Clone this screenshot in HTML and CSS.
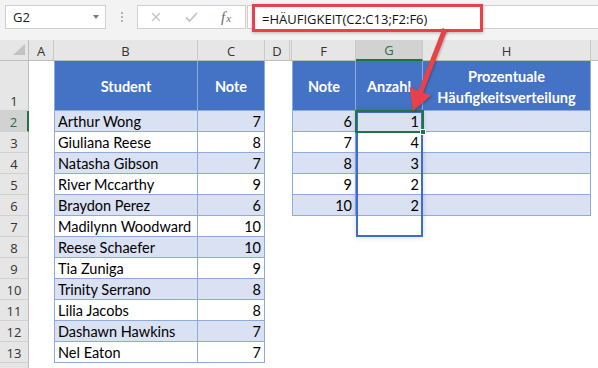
FILE: index.html
```html
<!DOCTYPE html>
<html lang="de">
<head>
<meta charset="utf-8">
<title>HÄUFIGKEIT</title>
<link rel="stylesheet" href="styles.css">
</head>
<body>
<div class="toolbar">
  <div class="namebox"><span>G2</span><span class="dd"></span></div>
  <div class="dots"><i></i><i></i><i></i></div>
  <div class="fxbox">
    <svg class="ico-x" width="10" height="10" viewBox="0 0 10 10"><path d="M1 1L9 9M9 1L1 9" stroke="#c4c4c4" stroke-width="1.4" fill="none"/></svg>
    <svg class="ico-ok" width="13" height="10" viewBox="0 0 13 10"><path d="M1 5.5L4.5 9L12 1" stroke="#c4c4c4" stroke-width="1.8" fill="none"/></svg>
    <span class="fx"><i>f</i><i class="fxx">x</i></span>
  </div>
  <div class="formula"><div class="hl">=HÄUFIGKEIT(C2:C13;F2:F6)</div></div>
</div>
<div class="sheet">
  <div class="row colhdr">
    <div class="rh corner"><span class="tri"></span></div>
    <div class="hc a">A</div><div class="hc b">B</div><div class="hc cc">C</div><div class="hc d">D</div><div class="hc e"></div><div class="hc f">F</div><div class="hc g sel">G</div><div class="hc h">H</div><div class="hc i"></div>
  </div>
  <div class="row tall">
    <div class="rh">1</div>
    <div class="c a"></div><div class="c b t hd">Student</div><div class="c cc t hd">Note</div><div class="c d"></div><div class="c e"></div><div class="c f t hd">Note</div><div class="c g t hd">Anzahl</div><div class="c h t hd">Prozentuale<br>Häufigkeitsverteilung</div><div class="c i"></div>
  </div>
  <div class="row band">
    <div class="rh sel">2</div>
    <div class="c a"></div><div class="c b t">Arthur Wong</div><div class="c cc t n">7</div><div class="c d"></div><div class="c e"></div><div class="c f t n">6</div><div class="c g t n">1</div><div class="c h t"></div><div class="c i"></div>
  </div>
  <div class="row">
    <div class="rh">3</div>
    <div class="c a"></div><div class="c b t">Giuliana Reese</div><div class="c cc t n">8</div><div class="c d"></div><div class="c e"></div><div class="c f t n">7</div><div class="c g t n">4</div><div class="c h t"></div><div class="c i"></div>
  </div>
  <div class="row band">
    <div class="rh">4</div>
    <div class="c a"></div><div class="c b t">Natasha Gibson</div><div class="c cc t n">7</div><div class="c d"></div><div class="c e"></div><div class="c f t n">8</div><div class="c g t n">3</div><div class="c h t"></div><div class="c i"></div>
  </div>
  <div class="row">
    <div class="rh">5</div>
    <div class="c a"></div><div class="c b t">River Mccarthy</div><div class="c cc t n">9</div><div class="c d"></div><div class="c e"></div><div class="c f t n">9</div><div class="c g t n">2</div><div class="c h t"></div><div class="c i"></div>
  </div>
  <div class="row band">
    <div class="rh">6</div>
    <div class="c a"></div><div class="c b t">Braydon Perez</div><div class="c cc t n">6</div><div class="c d"></div><div class="c e"></div><div class="c f t n">10</div><div class="c g t n">2</div><div class="c h t"></div><div class="c i"></div>
  </div>
  <div class="row">
    <div class="rh">7</div>
    <div class="c a"></div><div class="c b t">Madilynn Woodward</div><div class="c cc t n">10</div><div class="c d"></div><div class="c e"></div><div class="c f"></div><div class="c g"></div><div class="c h"></div><div class="c i"></div>
  </div>
  <div class="row band">
    <div class="rh">8</div>
    <div class="c a"></div><div class="c b t">Reese Schaefer</div><div class="c cc t n">10</div><div class="c d"></div><div class="c e"></div><div class="c f"></div><div class="c g"></div><div class="c h"></div><div class="c i"></div>
  </div>
  <div class="row">
    <div class="rh">9</div>
    <div class="c a"></div><div class="c b t">Tia Zuniga</div><div class="c cc t n">9</div><div class="c d"></div><div class="c e"></div><div class="c f"></div><div class="c g"></div><div class="c h"></div><div class="c i"></div>
  </div>
  <div class="row band">
    <div class="rh">10</div>
    <div class="c a"></div><div class="c b t">Trinity Serrano</div><div class="c cc t n">8</div><div class="c d"></div><div class="c e"></div><div class="c f"></div><div class="c g"></div><div class="c h"></div><div class="c i"></div>
  </div>
  <div class="row">
    <div class="rh">11</div>
    <div class="c a"></div><div class="c b t">Lilia Jacobs</div><div class="c cc t n">8</div><div class="c d"></div><div class="c e"></div><div class="c f"></div><div class="c g"></div><div class="c h"></div><div class="c i"></div>
  </div>
  <div class="row band">
    <div class="rh">12</div>
    <div class="c a"></div><div class="c b t">Dashawn Hawkins</div><div class="c cc t n">7</div><div class="c d"></div><div class="c e"></div><div class="c f"></div><div class="c g"></div><div class="c h"></div><div class="c i"></div>
  </div>
  <div class="row">
    <div class="rh">13</div>
    <div class="c a"></div><div class="c b t">Nel Eaton</div><div class="c cc t n">7</div><div class="c d"></div><div class="c e"></div><div class="c f"></div><div class="c g"></div><div class="c h"></div><div class="c i"></div>
  </div>
  <div class="row">
    <div class="rh"></div>
    <div class="c a"></div><div class="c b"></div><div class="c cc"></div><div class="c d"></div><div class="c e"></div><div class="c f"></div><div class="c g"></div><div class="c h"></div><div class="c i"></div>
  </div>
  <div class="range"></div>
  <div class="selbox"><span class="handle"></span></div>
</div>
<svg class="arrow" width="598" height="368" viewBox="0 0 598 368">
  <line x1="445" y1="29" x2="420.5" y2="92" stroke="#e8414b" stroke-width="5"/>
  <polygon points="413,111 431,95.4 409.5,87.2" fill="#e8414b"/>
</svg>
</body>
</html>
```

FILE: styles.css
```css
* { box-sizing: border-box; margin: 0; padding: 0; }
html, body { width: 598px; height: 368px; overflow: hidden; background: #fff; }
body { position: relative; font-family: "Open Sans", sans-serif; }

.toolbar {
  height: 40px;
  background: #f3f3f3;
  display: flex;
  align-items: flex-start;
  padding: 5px 0 0 5px;
}
.namebox {
  width: 101px; height: 24px;
  background: #fff;
  border: 1px solid #cfcfcf;
  display: flex; align-items: center; justify-content: space-between;
  padding: 0 6px 0 7px;
  font-size: 13px; color: #222; line-height: 22px;
}
.dd {
  width: 0; height: 0;
  border-left: 3.5px solid transparent;
  border-right: 3.5px solid transparent;
  border-top: 4px solid #7a7a7a;
}
.dots {
  width: 31px; height: 24px;
  display: flex; flex-direction: column; align-items: center; justify-content: center; gap: 2px;
}
.dots i { display: block; width: 2px; height: 2px; background: #b4b4b4; }
.fxbox {
  width: 109px; height: 24px;
  background: #fff;
  border: 1px solid #cfcfcf;
  display: flex; align-items: center;
}
.ico-x { margin-left: 13px; }
.ico-ok { margin-left: 24px; }
.fx {
  margin-left: 23px;
  font-family: "Liberation Serif", serif;
  font-size: 15px; color: #6b6b6b; line-height: 20px;
}
.fx .fxx { font-size: 11px; margin-left: 1px; }
.formula {
  flex: 1; height: 24px; margin-left: 1px;
  background: #fff;
  border: 1px solid #cfcfcf; border-right: none;
  display: flex; align-items: flex-start;
}
.hl {
  width: 231px; height: 28px;
  margin: -2px 0 0 4px;
  border: 3px solid #e8414b;
  box-shadow: 0 1px 3px rgba(0,0,0,.25);
  background: #fff;
  padding: 1px 0 0 7px;
  font-size: 13px; line-height: 22px; color: #111;
  white-space: nowrap;
}

.sheet { position: relative; }
.row { display: flex; height: 21px; }
.row.tall { height: 50px; }

.rh {
  width: 29px; flex: none;
  background: #e6e6e6;
  border-right: 1px solid #bdbdbd;
  border-bottom: 1px solid #d0d0d0;
  display: flex; align-items: flex-end; justify-content: center;
  font-size: 13px; line-height: 17px; color: #333;
}
.rh.sel { background: #d2d2d2; color: #217346; border-right: 2px solid #217346; }
.corner { position: relative; border-bottom: 1px solid #bdbdbd; }
.tri {
  position: absolute; right: 3px; bottom: 5px;
  width: 0; height: 0;
  border-left: 12px solid transparent;
  border-bottom: 11px solid #c2c2c2;
}

.hc {
  flex: none;
  background: #e6e6e6;
  border-right: 1px solid #cacaca;
  border-bottom: 1px solid #bdbdbd;
  display: flex; align-items: flex-end; justify-content: center;
  font-size: 13px; line-height: 17px; color: #333;
}
.hc.sel { background: #d2d2d2; color: #217346; border-bottom: 2px solid #217346; }
.hc.i { border-right: none; }

.a { width: 25px; }
.b { width: 144px; }
.cc { width: 67px; }
.d { width: 25px; }
.e { width: 2px; }
.f { width: 64px; }
.g { width: 67px; }
.h { width: 168px; }
.i { flex: 1; }

.c {
  flex: none;
  font-family: Lato, sans-serif;
  font-size: 14.5px; line-height: 20px; padding-top: 1px;
  color: #000;
  white-space: nowrap;
}
.c.i { flex: 1; }
.t {
  border-right: 1px solid #8ea9db;
  border-bottom: 1px solid #8ea9db;
  padding-left: 3px;
}
.b.t, .f.t { border-left: 1px solid #8ea9db; }
.band .t { background: #d9e1f2; }
.n { text-align: right; padding-right: 3px; padding-left: 0; }
.hd {
  background: #4472c4;
  color: #fff;
  font-weight: bold;
  display: flex; align-items: center; justify-content: center;
  text-align: center;
  line-height: 21px;
  padding: 2px 0 0 0;
}

.range {
  position: absolute;
  left: 356px; top: 71px;
  width: 67px; height: 126px;
  border: 2px solid #3a6ec9;
  box-shadow: 0 0 6px rgba(0,0,0,.16);
}
.selbox {
  position: absolute;
  left: 355px; top: 70px;
  width: 69px; height: 23px;
  border: 2px solid #217346;
}
.handle {
  position: absolute;
  right: -4px; bottom: -4px;
  width: 6px; height: 6px;
  background: #217346;
  border: 1px solid #fff;
}

.arrow {
  position: absolute; left: 0; top: 0;
  pointer-events: none;
  filter: drop-shadow(1px 1px 1px rgba(0,0,0,.25));
}
```
